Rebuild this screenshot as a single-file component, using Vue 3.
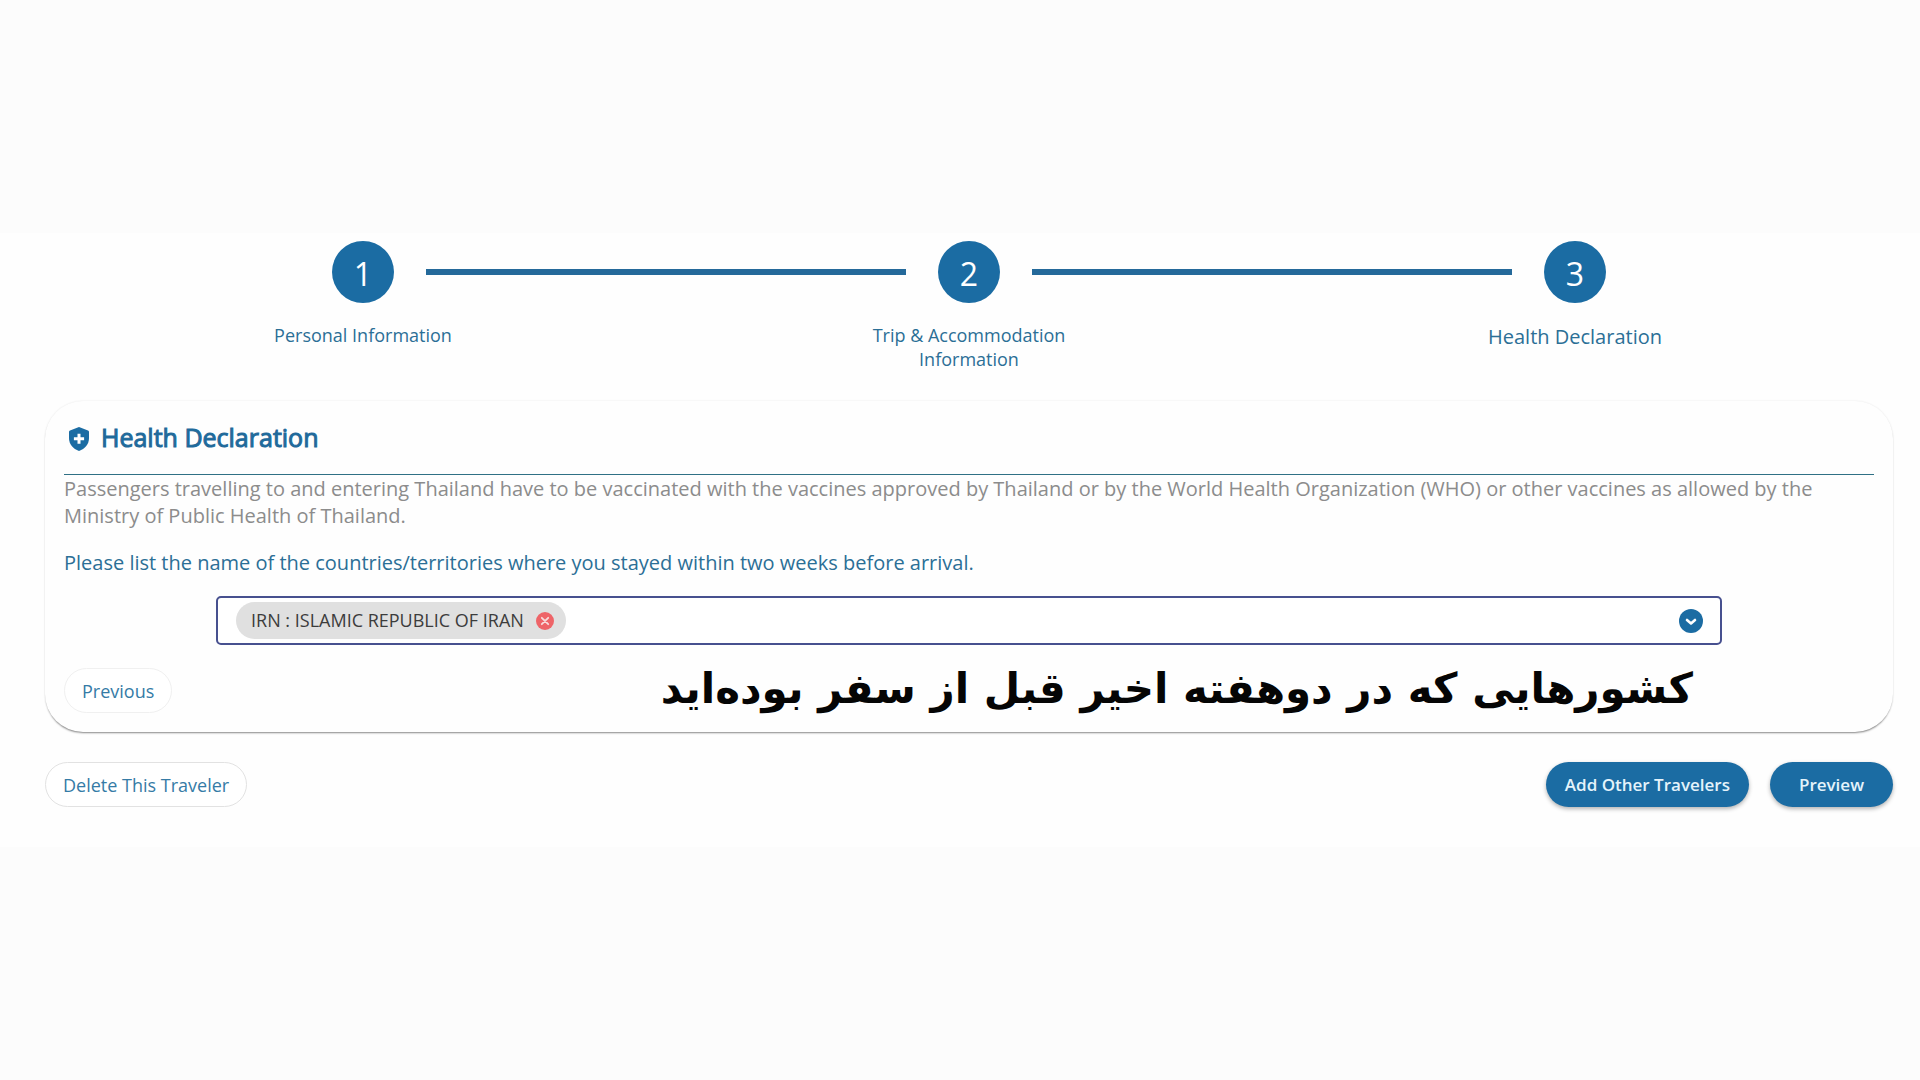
<script setup>
import { ref } from 'vue'

const steps = [
  { number: 1, label: 'Personal Information' },
  { number: 2, label: 'Trip & Accommodation Information' },
  { number: 3, label: 'Health Declaration', current: true },
]

const countries = ref(['IRN : ISLAMIC REPUBLIC OF IRAN'])
const query = ref('')

function removeCountry(index) {
  countries.value.splice(index, 1)
}
</script>

<template>
  <main class="page">
    <ol class="stepper">
      <li
        v-for="(step, i) in steps"
        :key="step.number"
        class="step"
        :class="{ current: step.current }"
      >
        <span class="line before" :class="{ hidden: i === 0 }"></span>
        <span class="circle">{{ step.number }}</span>
        <span class="line after" :class="{ hidden: i === steps.length - 1 }"></span>
        <span class="label">{{ step.label }}</span>
      </li>
    </ol>

    <section class="card">
      <h1 class="title">
        <svg class="shield" viewBox="0 0 20 24" aria-hidden="true">
          <path
            fill="#1b6ca3"
            d="M10 0 L19 3.4 Q20 3.8 20 5 V11 C20 17.4 16 21.8 10 24 C4 21.8 0 17.4 0 11 V5 Q0 3.8 1 3.4 Z"
          />
          <path
            fill="#fff"
            d="M8.5 6.8 h3 v3.4 h3.6 v3 h-3.6 v3.6 h-3 v-3.6 H4.9 v-3 h3.6 Z"
          />
        </svg>
        Health Declaration
      </h1>
      <p class="intro">
        Passengers travelling to and entering Thailand have to be vaccinated with the vaccines
        approved by Thailand or by the World Health Organization (WHO) or other vaccines as allowed
        by the Ministry of Public Health of Thailand.
      </p>
      <label class="question" for="countries">
        Please list the name of the countries/territories where you stayed within two weeks before
        arrival.
      </label>

      <div class="field">
        <span v-for="(country, i) in countries" :key="country" class="chip">
          {{ country }}
          <button
            class="icon-button"
            type="button"
            :aria-label="'Remove ' + country"
            @click="removeCountry(i)"
          >
            <svg class="remove" viewBox="0 0 18 18" aria-hidden="true">
              <circle cx="9" cy="9" r="9" fill="#ee6468" />
              <path
                d="M5.8 5.8 L12.2 12.2 M12.2 5.8 L5.8 12.2"
                stroke="#f7dcdc"
                stroke-width="1.8"
                stroke-linecap="round"
              />
            </svg>
          </button>
        </span>
        <input id="countries" v-model="query" class="search" type="text" autocomplete="off" />
        <button class="icon-button" type="button" aria-label="Show countries">
          <svg class="chevron" viewBox="0 0 24 24" aria-hidden="true">
            <circle cx="12" cy="12" r="12" fill="#1b6ca3" />
            <path
              d="M8 11 L12 14.4 L16 11"
              fill="none"
              stroke="#fff"
              stroke-width="2.6"
              stroke-linecap="round"
              stroke-linejoin="round"
            />
          </svg>
        </button>
      </div>

      <div class="card-footer">
        <button class="button outline faint" type="button">Previous</button>
        <p class="caption" lang="fa" dir="rtl">کشورهایی که در دوهفته اخیر قبل از سفر بوده‌اید</p>
      </div>
    </section>

    <footer class="actions">
      <button class="button outline" type="button">Delete This Traveler</button>
      <div class="primary-actions">
        <button class="button primary" type="button">Add Other Travelers</button>
        <button class="button primary wide" type="button">Preview</button>
      </div>
    </footer>
  </main>
</template>

<style>
html {
  background: #fcfcfc;
}
body {
  margin: 0;
}
#app {
  display: flex;
  flex-direction: column;
  justify-content: center;
  min-height: 100vh;
}
</style>

<style scoped>
.page {
  box-sizing: border-box;
  width: 100%;
  padding: 8px 27px 40px 45px;
  background: #fefefe;
  font-family: 'Open Sans', 'Noto Sans', sans-serif;
  color: #2b6f96;
}

.stepper {
  display: grid;
  grid-template-columns: repeat(3, 1fr);
  margin: 0;
  padding: 0 15px;
  list-style: none;
}
.step {
  display: grid;
  grid-template-columns: 1fr 62px 1fr;
  align-items: center;
  align-content: start;
  row-gap: 20px;
}
.line {
  height: 6px;
  background: #24699a;
}
.line.before {
  margin-right: 32px;
}
.line.after {
  margin-left: 32px;
}
.line.hidden {
  visibility: hidden;
}
.circle {
  height: 62px;
  border-radius: 50%;
  background: #1b6ca3;
  color: #fff;
  font-size: 32px;
  line-height: 66px;
  text-align: center;
}
.label {
  grid-column: 1 / -1;
  justify-self: center;
  max-width: 200px;
  font-size: 18px;
  line-height: 24px;
  text-align: center;
}
.current .label {
  font-size: 20px;
  line-height: 28px;
}

.card {
  margin-top: 30px;
  padding: 18px 19px 19px;
  border-radius: 38px;
  background: #fefefe;
  box-shadow:
    0 2px 2px -1px rgba(0, 0, 0, 0.45),
    0 0 2px rgba(0, 0, 0, 0.1);
}
.title {
  display: flex;
  align-items: center;
  gap: 12px;
  margin: 0;
  padding: 0 5px 19px;
  border-bottom: 1px solid #2f7085;
  color: #1f6a9b;
  font-size: 25px;
  font-weight: 400;
  line-height: 36px;
  -webkit-text-stroke: 1px #1f6a9b;
}
.shield {
  width: 20px;
  height: 24px;
  margin-top: 4px;
}
.intro {
  margin: 0;
  color: #8c8c8c;
  font-size: 20px;
  line-height: 27px;
}
.question {
  display: block;
  margin-top: 20px;
  font-size: 20px;
  line-height: 28px;
}

.field {
  display: flex;
  align-items: center;
  box-sizing: border-box;
  height: 49px;
  margin: 19px 152px 0;
  padding: 0 17px 0 18px;
  border: 2px solid #47508f;
  border-radius: 5px;
  background: #fff;
}
.chip {
  display: flex;
  align-items: center;
  gap: 12px;
  padding: 0 12px 0 15px;
  border-radius: 19px;
  background: #e0e0e0;
  color: #3c3c3c;
  font-size: 18px;
  line-height: 37px;
}
.icon-button {
  display: flex;
  padding: 0;
  border: 0;
  background: none;
  cursor: pointer;
}
.remove {
  width: 18px;
  height: 18px;
}
.chevron {
  width: 24px;
  height: 24px;
}
.search {
  flex: 1;
  min-width: 0;
  border: 0;
  outline: 0;
  background: none;
  font: inherit;
  font-size: 18px;
}

.card-footer {
  display: flex;
  align-items: center;
  justify-content: space-between;
  margin-top: 23px;
}
.caption {
  margin: 0 181px 4px 0;
  color: #050505;
  font-family: 'DejaVu Sans', sans-serif;
  font-size: 42px;
  font-weight: 700;
  line-height: 40px;
  white-space: nowrap;
}

.button {
  box-sizing: border-box;
  height: 45px;
  padding: 0 19px;
  border: 0;
  border-radius: 23px;
  font-family: inherit;
  font-size: 18px;
  line-height: 24px;
  white-space: nowrap;
  cursor: pointer;
}
.outline {
  padding: 0 17px;
  border: 1px solid #e2e2e2;
  background: #fff;
  color: #357ba6;
}
.outline.faint {
  border-color: #f0f0f0;
}
.primary {
  background: #1b6ca3;
  box-shadow: 0 2px 4px rgba(0, 0, 0, 0.3);
  color: #e4f3fb;
  font-size: 17px;
  font-weight: 600;
}
.primary.wide {
  padding: 0 29px;
}
.actions {
  display: flex;
  justify-content: space-between;
  margin-top: 30px;
}
.primary-actions {
  display: flex;
  gap: 21px;
}
</style>
